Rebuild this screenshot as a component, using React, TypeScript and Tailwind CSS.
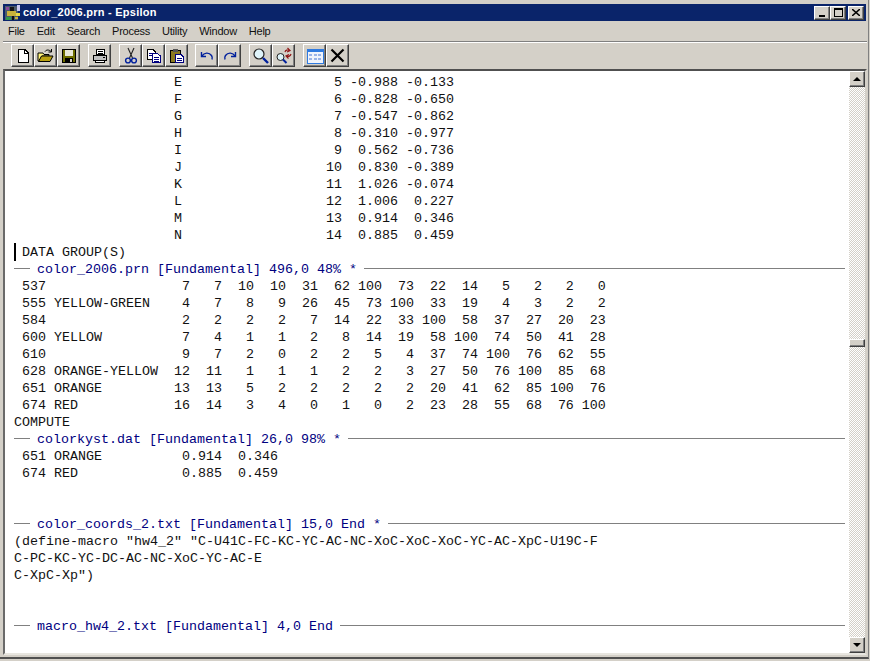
const CH = 'font-["Liberation_Mono",monospace]';

const coords: [string, number, string, string][] = [
  ['E', 5, '-0.988', '-0.133'],
  ['F', 6, '-0.828', '-0.650'],
  ['G', 7, '-0.547', '-0.862'],
  ['H', 8, '-0.310', '-0.977'],
  ['I', 9, ' 0.562', '-0.736'],
  ['J', 10, ' 0.830', '-0.389'],
  ['K', 11, ' 1.026', '-0.074'],
  ['L', 12, ' 1.006', ' 0.227'],
  ['M', 13, ' 0.914', ' 0.346'],
  ['N', 14, ' 0.885', ' 0.459'],
];

const rows: [number, string, number[]][] = [
  [537, '', [7, 7, 10, 10, 31, 62, 100, 73, 22, 14, 5, 2, 2, 0]],
  [555, 'YELLOW-GREEN', [4, 7, 8, 9, 26, 45, 73, 100, 33, 19, 4, 3, 2, 2]],
  [584, '', [2, 2, 2, 2, 7, 14, 22, 33, 100, 58, 37, 27, 20, 23]],
  [600, 'YELLOW', [7, 4, 1, 1, 2, 8, 14, 19, 58, 100, 74, 50, 41, 28]],
  [610, '', [9, 7, 2, 0, 2, 2, 5, 4, 37, 74, 100, 76, 62, 55]],
  [628, 'ORANGE-YELLOW', [12, 11, 1, 1, 1, 2, 2, 3, 27, 50, 76, 100, 85, 68]],
  [651, 'ORANGE', [13, 13, 5, 2, 2, 2, 2, 2, 20, 41, 62, 85, 100, 76]],
  [674, 'RED', [16, 14, 3, 4, 0, 1, 0, 2, 23, 28, 55, 68, 76, 100]],
];

function Line({ children }: { children?: string }) {
  return <div className="h-[17px] whitespace-pre text-[#111]">{children}</div>;
}

function ModeLine({ text }: { text: string }) {
  return (
    <div className="flex h-[17px] items-center whitespace-pre text-[#00007f]">
      <div className="mt-[-2px] h-px w-4 bg-[#808080]" />
      <span className="ml-[7px] mr-[7px]">{text}</span>
      <div className="mt-[-2px] h-px flex-1 bg-[#808080]" />
    </div>
  );
}

function Raised({ className, children }: { className: string; children?: React.ReactNode }) {
  return (
    <div className={`flex items-center justify-center border border-b-[#404040] border-l-white border-r-[#404040] border-t-white bg-[#d4d0c8] shadow-[inset_-1px_-1px_0_#808080] ${className}`}>
      {children}
    </div>
  );
}

function ToolButton({ children }: { children: React.ReactNode }) {
  return <Raised className="h-[23px] w-[23px]">{children}</Raised>;
}

function Icon({ children }: { children: React.ReactNode }) {
  return (
    <svg width="16" height="16" viewBox="0 0 16 16" shapeRendering="crispEdges">
      {children}
    </svg>
  );
}

function AppIcon() {
  return (
    <svg width="16" height="16" viewBox="0 0 16 16" shapeRendering="crispEdges">
      <rect x="0" y="1" width="13" height="14" fill="#4a5a6a" />
      <rect x="1" y="2" width="3" height="3" fill="#8a4a9a" />
      <rect x="5" y="2" width="4" height="5" fill="#141414" />
      <rect x="12" y="0" width="3" height="6" fill="#c8c8f0" />
      <rect x="2" y="6" width="9" height="5" fill="#c9b23a" />
      <rect x="11" y="8" width="4" height="3" fill="#e6d84a" />
      <rect x="1" y="12" width="5" height="3" fill="#2f9a4a" />
      <rect x="7" y="11" width="2" height="4" fill="#111" />
      <rect x="10" y="12" width="3" height="2" fill="#c9b23a" />
    </svg>
  );
}

export default function App() {
  return (
    <div className='h-[661px] w-[870px] overflow-hidden bg-[#d4d0c8] font-["Liberation_Sans",Arial,sans-serif]'>
      <div className="flex h-[659px] w-[869px] flex-col border-b-2 border-r border-b-[#505050] border-r-[#808080] pb-[2px] pl-[3px] pr-px pt-[4px]">
        {/* title bar */}
        <div className="mr-px flex h-[17px] shrink-0 items-center bg-[#0a246a] px-[2px]">
          <AppIcon />
          <span className="ml-[2px] text-[11px] font-bold tracking-[0.25px] text-white">color_2006.prn - Epsilon</span>
          <div className="ml-auto flex">
            <Raised className="h-[14px] w-[16px]">
              <div className="mt-[7px] h-[2px] w-[6px] bg-black" />
            </Raised>
            <Raised className="h-[14px] w-[16px]">
              <div className="h-[9px] w-[9px] border border-t-2 border-black" />
            </Raised>
            <Raised className="ml-[2px] h-[14px] w-[16px]">
              <svg width="8" height="7" viewBox="0 0 8 7">
                <path d="M0 0L8 7M8 0L0 7" stroke="#000" strokeWidth="1.5" />
              </svg>
            </Raised>
          </div>
        </div>

        {/* menu bar */}
        <div className="flex h-[20px] shrink-0 items-center gap-[12px] pl-[5px] text-[11px] tracking-[-0.25px] text-[#111]">
          <span>File</span>
          <span>Edit</span>
          <span>Search</span>
          <span>Process</span>
          <span>Utility</span>
          <span>Window</span>
          <span>Help</span>
        </div>

        {/* toolbar */}
        <div className="flex h-[28px] shrink-0 items-start border-t border-t-[#808080] pl-[8px] pt-[2px] shadow-[inset_0_1px_0_#fff]">
          <ToolButton>
            <Icon>
              <path d="M3.500 1.500H10L13.500 5V14.500H3.500Z" fill="#fff" stroke="#000" />
              <path d="M9.500 1.500V5.500H13.500" fill="none" stroke="#000" />
            </Icon>
          </ToolButton>
          <ToolButton>
            <svg width="17" height="16" viewBox="0 0 17 16">
              <path d="M1 5H6L7 6.500H12V8H5L3 13H1Z" fill="#fff37a" stroke="#000" />
              <path d="M1.500 13.500L4.500 8H16L13 13.500Z" fill="#b8a010" stroke="#000" />
              <path d="M8 3.500C9.500 1.500 12 1.500 14 3.500M14.500 1V4H11.500" fill="none" stroke="#000" />
            </svg>
          </ToolButton>
          <ToolButton>
            <Icon>
              <rect x="1.500" y="1.500" width="13" height="13" fill="#6e6e00" stroke="#000" />
              <rect x="4" y="2" width="8" height="6" fill="#e8e8d8" />
              <rect x="4" y="10" width="8" height="4" fill="#000" />
              <rect x="9" y="11" width="2" height="3" fill="#d4d0c8" />
            </Icon>
          </ToolButton>
          <div className="w-[8px]" />
          <ToolButton>
            <Icon>
              <path d="M4.500 1.500H12.500V6.500H4.500Z" fill="#fff" stroke="#000" />
              <path d="M1.500 7.500H14.500V12.500H1.500Z" fill="#c0c0c0" stroke="#000" />
              <path d="M3.500 12.500H12.500V14.500H3.500Z" fill="#fff" stroke="#000" />
              <path d="M6 3.500H11M6 5.500H11" stroke="#000" />
              <rect x="11" y="9" width="2" height="1" fill="#000" />
            </Icon>
          </ToolButton>
          <div className="w-[8px]" />
          <ToolButton>
            <svg width="16" height="18" viewBox="0 0 16 18">
              <path d="M5 1L9.500 11M11 1L6.500 11" fill="none" stroke="#222" strokeWidth="1.100" />
              <circle cx="5" cy="13.500" r="2.400" fill="none" stroke="#00209c" strokeWidth="1.400" />
              <circle cx="11" cy="13.500" r="2.400" fill="none" stroke="#00209c" strokeWidth="1.400" />
            </svg>
          </ToolButton>
          <ToolButton>
            <Icon>
              <path d="M1.500 1.500H7L9.500 4V11.500H1.500Z" fill="#fff" stroke="#000" />
              <path d="M6.500 5.500H11.500L14.500 8V14.500H6.500Z" fill="#fff" stroke="#00007f" />
              <path d="M3 5H6M3 7H6M8 9H13M8 11H13M8 13H13" stroke="#00007f" />
            </Icon>
          </ToolButton>
          <ToolButton>
            <Icon>
              <rect x="1.500" y="2.500" width="10" height="12" fill="#8c7a20" stroke="#000" />
              <rect x="4" y="1" width="5" height="3" fill="#555" />
              <path d="M6.500 6.500H12L14.500 9V14.500H6.500Z" fill="#fff" stroke="#00007f" />
              <path d="M8 10H13M8 12H13" stroke="#00007f" />
            </Icon>
          </ToolButton>
          <div className="w-[7px]" />
          <ToolButton>
            <svg width="14" height="12" viewBox="0 0 14 12">
              <path d="M1.500 2V6.500H6M2 6C4 2.500 9 2 11.500 5.500C12.500 7 12.500 8 12 9.500" fill="none" stroke="#00209c" strokeWidth="1.400" />
            </svg>
          </ToolButton>
          <ToolButton>
            <svg width="14" height="12" viewBox="0 0 14 12">
              <path d="M12.500 2V6.500H8M12 6C10 2.500 5 2 2.500 5.500C1.500 7 1.500 8 2 9.500" fill="none" stroke="#00209c" strokeWidth="1.400" />
            </svg>
          </ToolButton>
          <div className="w-[8px]" />
          <ToolButton>
            <svg width="18" height="18" viewBox="0 0 18 18">
              <circle cx="7" cy="7" r="5" fill="#dff4fa" stroke="#222" strokeWidth="1.200" />
              <path d="M11 11L16 16" stroke="#00209c" strokeWidth="2.400" />
            </svg>
          </ToolButton>
          <ToolButton>
            <svg width="18" height="18" viewBox="0 0 18 18">
              <circle cx="5.500" cy="10" r="3.500" fill="#dff4fa" stroke="#222" />
              <path d="M8 12.500L11.500 16" stroke="#00209c" strokeWidth="2" />
              <path d="M10 5C10.500 3 12.500 2.500 14 3.500M12.500 1L15 3.500L12 5M16 7C15.500 9 13.500 10 12 9M13.500 11.500L11 9L14 7.500" fill="none" stroke="#901818" strokeWidth="1.200" />
            </svg>
          </ToolButton>
          <div className="w-[8px]" />
          <ToolButton>
            <svg width="18" height="16" viewBox="0 0 18 16" shapeRendering="crispEdges">
              <rect x="1" y="1" width="16" height="14" fill="#f0f4fc" stroke="#2f7ae0" />
              <rect x="1" y="1" width="16" height="3" fill="#2f7ae0" />
              <path d="M3 6h3v2H3zM7.500 6h3v2h-3zM12 6h3v2h-3zM3 10h3v2H3zM7.500 10h3v2h-3zM12 10h3v2h-3z" fill="#9ab4e8" />
            </svg>
          </ToolButton>
          <ToolButton>
            <svg width="15" height="15" viewBox="0 0 15 15">
              <path d="M1.500 1.500L13.500 13.500M13.500 1.500L1.500 13.500" stroke="#000" strokeWidth="2.200" />
            </svg>
          </ToolButton>
        </div>

        {/* editor */}
        <div className="flex min-h-0 flex-1 border-2 border-b-[#e8e6e0] border-l-[#6a6a6a] border-r-[#d4d0c8] border-t-[#505050] bg-white">
          <div className={`min-w-0 flex-1 overflow-hidden pl-[9px] pr-[4px] pt-[3px] text-[13.333px] leading-[17px] ${CH}`}>
            {coords.map(([letter, n, a, b]) => (
              <Line key={letter}>{`${' '.repeat(20)}${letter}${String(n).padStart(20)} ${a} ${b}`}</Line>
            ))}
            <div className="relative">
              <div className="absolute left-0 top-[-1px] h-[18px] w-[2px] bg-black" />
              <Line> DATA GROUP(S)</Line>
            </div>
            <ModeLine text="color_2006.prn [Fundamental] 496,0 48% *" />
            {rows.map(([id, name, nums]) => (
              <Line key={id}>{` ${id} ${name.padEnd(13)}${nums.map((v) => String(v).padStart(4)).join('')}`}</Line>
            ))}
            <Line>COMPUTE</Line>
            <ModeLine text="colorkyst.dat [Fundamental] 26,0 98% *" />
            <Line> 651 ORANGE          0.914  0.346</Line>
            <Line> 674 RED             0.885  0.459</Line>
            <Line />
            <Line />
            <ModeLine text="color_coords_2.txt [Fundamental] 15,0 End *" />
            <Line>{'(define-macro "hw4_2" "C-U41C-FC-KC-YC-AC-NC-XoC-XoC-XoC-YC-AC-XpC-U19C-F'}</Line>
            <Line>C-PC-KC-YC-DC-AC-NC-XoC-YC-AC-E</Line>
            <Line>{'C-XpC-Xp")'}</Line>
            <Line />
            <Line />
            <ModeLine text="macro_hw4_2.txt [Fundamental] 4,0 End" />
          </div>

          {/* scrollbar */}
          <div className="flex w-[16px] shrink-0 flex-col bg-[repeating-conic-gradient(#d4d0c8_0_25%,#fff_0_50%)] bg-[length:2px_2px]">
            <Raised className="h-[16px] w-[16px]">
              <div className="h-0 w-0 border-x-[4px] border-b-[4px] border-x-transparent border-b-black" />
            </Raised>
            <div className="flex flex-1 flex-col">
              <div className="h-[252px]" />
              <Raised className="h-[8px] w-[16px]" />
            </div>
            <Raised className="h-[16px] w-[16px]">
              <div className="h-0 w-0 border-x-[4px] border-t-[4px] border-x-transparent border-t-black" />
            </Raised>
          </div>
        </div>
      </div>
    </div>
  );
}
